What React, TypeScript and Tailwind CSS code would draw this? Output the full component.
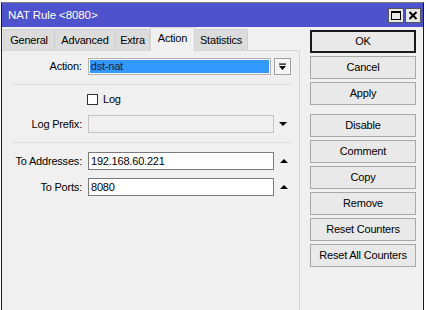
import React from "react";

const font = { fontFamily: '"Liberation Sans", Arial, sans-serif' };

function Btn({ label, def }: { label: string; def?: boolean }) {
  return (
    <div
      className={
        "h-[23px] w-[106px] flex items-center justify-center bg-[#e9e9e9] text-[11px] tracking-[-0.2px] text-black " +
        (def ? "border-2 border-[#1a1a1a]" : "border border-[#a8a8a8]")
      }
    >
      {label}
    </div>
  );
}

function TriUp() {
  return (
    <svg width="10" height="6" viewBox="0 0 10 6" className="block">
      <polygon points="1,5 9,5 5,1" fill="#000" />
    </svg>
  );
}
function TriDown() {
  return (
    <svg width="10" height="6" viewBox="0 0 10 6" className="block">
      <polygon points="1,1 9,1 5,5" fill="#000" />
    </svg>
  );
}

export default function App() {
  return (
    <div className="w-[426px] h-[310px] bg-white overflow-hidden pt-[2px] pl-[1px]" style={font}>
      <div className="w-[423px] h-[320px] border-t border-[#7f7f7f] border-x border-x-[#1a1a1a] bg-[#f0f0f0] flex flex-col">
        {/* title bar */}
        <div className="h-[24px] bg-[#4f52cd] flex items-center pl-[6px] pr-[2px] shrink-0">
          <div className="text-white text-[11.5px] tracking-[-0.1px] flex-1 pt-[1px]">NAT Rule &lt;8080&gt;</div>
          <div className="flex gap-[1px]">
            <div className="w-[16px] h-[15px] bg-[#e8e8e8] border border-[#555] flex items-center justify-center">
              <div className="w-[10px] h-[9px] border border-black border-t-2"></div>
            </div>
            <div className="w-[16px] h-[15px] bg-[#e8e8e8] border border-[#555] flex items-center justify-center">
              <svg width="10" height="9" viewBox="0 0 10 9">
                <path d="M1.5 1 L8.5 8 M8.5 1 L1.5 8" stroke="#000" strokeWidth="2" />
              </svg>
            </div>
          </div>
        </div>
        {/* body */}
        <div className="flex flex-1">
          {/* left */}
          <div className="w-[298px] flex flex-col">
            <div className="h-[23px] flex items-end pl-[1px] text-[11px] tracking-[-0.2px]">
              <div className="h-[21px] w-[52px] bg-[#dcdcdc] border border-[#d0d0d0] border-b-0 flex items-center justify-center">General</div>
              <div className="h-[21px] w-[61px] bg-[#dcdcdc] border border-[#d0d0d0] border-b-0 border-l-0 flex items-center justify-center">Advanced</div>
              <div className="h-[21px] w-[34px] bg-[#dcdcdc] border border-[#d0d0d0] border-b-0 border-l-0 flex items-center justify-center">Extra</div>
              <div className="h-[24px] w-[45px] bg-[#f0f0f0] border border-[#d6d6d6] border-b-0 flex items-center justify-center pb-[3px] relative top-[1px]">Action</div>
              <div className="h-[21px] w-[53px] bg-[#dcdcdc] border border-[#d0d0d0] border-b-0 border-l-0 flex items-center justify-center">Statistics</div>
            </div>
            <div className="flex-1 border-t border-r border-[#d6d6d6] pl-[11px] pr-[8px] text-[11px] tracking-[-0.2px]">
              {/* Action row */}
              <div className="flex items-center mt-[7px] h-[17px]">
                <div className="w-[75px] text-right pr-[6px]">Action:</div>
                <div className="w-[184px] h-[17px] border border-[#b4b4b4] bg-white p-[1px]">
                  <div className="w-full h-full bg-[#3399ff] text-[#1a1a40] leading-[13px] pl-[1px]">dst-nat</div>
                </div>
                <div className="ml-[3px] w-[17px] h-[17px] border border-[#a0a0a0] bg-[#f7f7f7] flex items-center justify-center">
                  <svg width="9" height="8" viewBox="0 0 9 8">
                    <rect x="1" y="0.5" width="7" height="1.2" fill="#000" />
                    <polygon points="1,3 8,3 4.5,7" fill="#000" />
                  </svg>
                </div>
              </div>
              <div className="h-[1px] bg-[#dcdcdc] mt-[9px]"></div>
              {/* Log */}
              <div className="flex items-center mt-[9px] h-[11px] pl-[74px]">
                <div className="w-[11px] h-[11px] border border-[#333] bg-white"></div>
                <div className="ml-[5px]">Log</div>
              </div>
              {/* Log prefix */}
              <div className="flex items-center mt-[10px] h-[18px]">
                <div className="w-[75px] text-right pr-[6px]">Log Prefix:</div>
                <div className="w-[186px] h-[18px] border border-[#c4c4c4] bg-[#f0f0f0]"></div>
                <div className="ml-[4px]"><TriDown /></div>
              </div>
              <div className="h-[1px] bg-[#dcdcdc] mt-[9px]"></div>
              {/* To Addresses */}
              <div className="flex items-center mt-[9px] h-[18px]">
                <div className="w-[75px] text-right pr-[6px] whitespace-nowrap">To Addresses:</div>
                <div className="w-[186px] h-[18px] border border-[#7a7a7a] bg-white leading-[16px] pl-[2px]">192.168.60.221</div>
                <div className="ml-[5px]"><TriUp /></div>
              </div>
              <div className="flex items-center mt-[8px] h-[18px]">
                <div className="w-[75px] text-right pr-[6px]">To Ports:</div>
                <div className="w-[186px] h-[18px] border border-[#7a7a7a] bg-white leading-[16px] pl-[2px]">8080</div>
                <div className="ml-[5px]"><TriUp /></div>
              </div>
            </div>
          </div>
          {/* right buttons */}
          <div className="flex flex-col pl-[10px] pt-[3px]">
            <div className="flex flex-col gap-[3px]">
              <Btn label="OK" def />
              <Btn label="Cancel" />
              <Btn label="Apply" />
            </div>
            <div className="flex flex-col gap-[3px] mt-[9px]">
              <Btn label="Disable" />
              <Btn label="Comment" />
              <Btn label="Copy" />
              <Btn label="Remove" />
              <Btn label="Reset Counters" />
              <Btn label="Reset All Counters" />
            </div>
          </div>
        </div>
      </div>
    </div>
  );
}
